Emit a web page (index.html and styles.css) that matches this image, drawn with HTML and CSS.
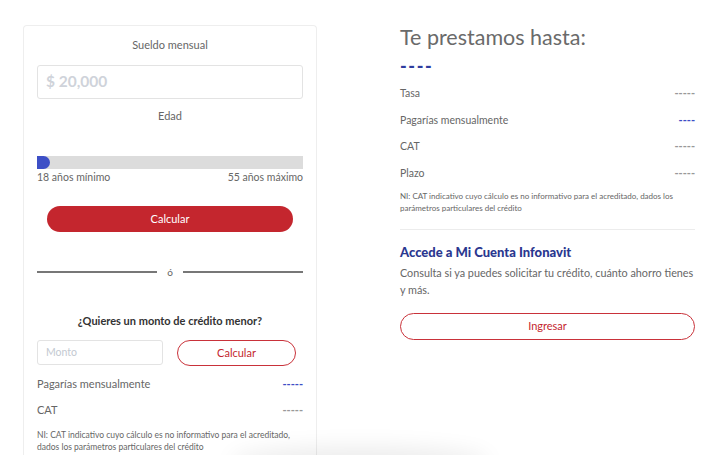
FILE: index.html
```html
<!DOCTYPE html>
<html lang="es">
<head>
<meta charset="utf-8">
<link rel="stylesheet" href="styles.css">
</head>
<body>
<div class="page">
  <section class="card">
    <div class="label">Sueldo mensual</div>
    <div class="input big">$ 20,000</div>
    <div class="label edad">Edad</div>
    <div class="slider"><span class="thumb"></span></div>
    <div class="range"><span>18 años mínimo</span><span>55 años máximo</span></div>
    <div class="btn solid">Calcular</div>
    <div class="divider"><span class="line"></span><span class="o">ó</span><span class="line"></span></div>
    <div class="question">¿Quieres un monto de crédito menor?</div>
    <div class="monto-row">
      <div class="input small">Monto</div>
      <div class="btn outline small-btn">Calcular</div>
    </div>
    <div class="row"><span>Pagarías mensualmente</span><span class="dash blue">-----</span></div>
    <div class="row"><span>CAT</span><span class="dash">-----</span></div>
    <p class="note">NI: CAT indicativo cuyo cálculo es no informativo para el acreditado, dados los parámetros particulares del crédito</p>
  </section>
  <section class="result">
    <h1 class="title">Te prestamos hasta:</h1>
    <div class="amount">----</div>
    <div class="rrow"><span>Tasa</span><span class="dash">-----</span></div>
    <div class="rrow"><span>Pagarías mensualmente</span><span class="dash blue">----</span></div>
    <div class="rrow"><span>CAT</span><span class="dash">-----</span></div>
    <div class="rrow"><span>Plazo</span><span class="dash">-----</span></div>
    <p class="rnote">NI: CAT indicativo cuyo cálculo es no informativo para el acreditado, dados los parámetros particulares del crédito</p>
    <hr class="sep">
    <h2 class="acc">Accede a Mi Cuenta Infonavit</h2>
    <p class="desc">Consulta si ya puedes solicitar tu crédito, cuánto ahorro tienes y más.</p>
    <div class="btn outline wide">Ingresar</div>
  </section>
</div>
<div class="shadow"></div>
</body>
</html>
```

FILE: styles.css
```css
* { box-sizing: border-box; }
html, body { margin: 0; padding: 0; background: #fff; overflow: hidden; height: 455px; }
body { font-family: Lato, "Open Sans", Arial, sans-serif; color: #666; position: relative; }
.page { display: flex; align-items: flex-start; padding: 25px 0 0 23px; gap: 83px; }
.card {
  width: 294px; height: 430px;
  border: 1.5px solid #eeeeee; border-bottom: none;
  border-radius: 4px 4px 0 0;
  padding: 12px 13px 0 13px;
  display: flex; flex-direction: column;
}
.label { text-align: center; font-size: 11px; color: #666; line-height: 14px; }
.input {
  border: 1.5px solid #e3e3e3; border-radius: 3px; color: #c9ced6;
}
.big { margin-top: 13px; height: 34px; padding: 0 8px; font-size: 15.5px; font-weight: 700; line-height: 31px; color: #cfd3da; }
.edad { margin-top: 10px; }
.slider { margin-top: 33px; height: 13px; background: #dcdcdc; position: relative; overflow: hidden; }
.thumb { position: absolute; left: -7px; top: 0; width: 20px; height: 13px; border-radius: 0 7px 7px 0; background: #3d4fc6; }
.range { display: flex; justify-content: space-between; font-size: 10.5px; color: #666; line-height: 14px; margin-top: 1px; }
.btn { text-align: center; font-size: 11px; border-radius: 14px; }
.solid { margin: 22px 10px 0; height: 26px; line-height: 26px; background: #c4262e; color: #fff; }
.divider { display: flex; align-items: center; gap: 9px; margin-top: 33px; height: 14px; }
.line { flex: 1; height: 1.5px; background: #777; }
.o { font-size: 10px; color: #666; width: 8px; text-align: center; }
.question { margin-top: 35px; text-align: center; font-weight: 700; font-size: 11px; color: #333; line-height: 14px; }
.monto-row { display: flex; gap: 14px; margin-top: 12px; align-items: flex-start; }
.small { width: 126px; height: 25px; font-size: 10.5px; padding: 0 8px; line-height: 22px; color: #c3c9d1; }
.outline { border: 1.5px solid #c9323a; color: #c4262e; background: #fff; }
.small-btn { width: 119px; height: 26px; line-height: 23px; }
.row { display: flex; justify-content: space-between; font-size: 11px; line-height: 14px; color: #666; }
.monto-row + .row { margin-top: 11px; }
.row + .row { margin-top: 12px; }
.dash { font-size: 11px; color: #999; font-weight: 900; }
.dash.blue { color: #3d4fc6; }
.note { margin: 12px 0 0; font-size: 8.5px; line-height: 12px; color: #666; }
.result { width: 295px; display: flex; flex-direction: column; margin-top: 2px; }
.title { margin: 0; font-size: 21.5px; font-weight: 400; color: #6a6a6a; line-height: 20px; }
.amount { margin-top: 12px; font-size: 18px; font-weight: 900; color: #2e3d9e; line-height: 14px; letter-spacing: 1.6px; }
.rrow { display: flex; justify-content: space-between; font-size: 10.5px; line-height: 14px; color: #666; margin-top: 12.5px; }
.amount + .rrow { margin-top: 13px; }
.rnote { margin: 10px 0 0; font-size: 8px; line-height: 12px; color: #666; }
.sep { margin: 15px 0 0; border: none; border-top: 1px solid #ececec; }
.acc { margin: 14px 0 0; font-size: 13px; font-weight: 900; color: #2a378f; line-height: 16px; }
.desc { margin: 4px 0 0; font-size: 10.8px; letter-spacing: 0; line-height: 17px; color: #666; }
.wide { margin-top: 15px; height: 27px; line-height: 24px; border-radius: 14px; }
.shadow { position: absolute; left: 230px; bottom: -30px; width: 260px; height: 30px; box-shadow: 0 -8px 22px rgba(0,0,0,0.08); border-radius: 50%; }
```
